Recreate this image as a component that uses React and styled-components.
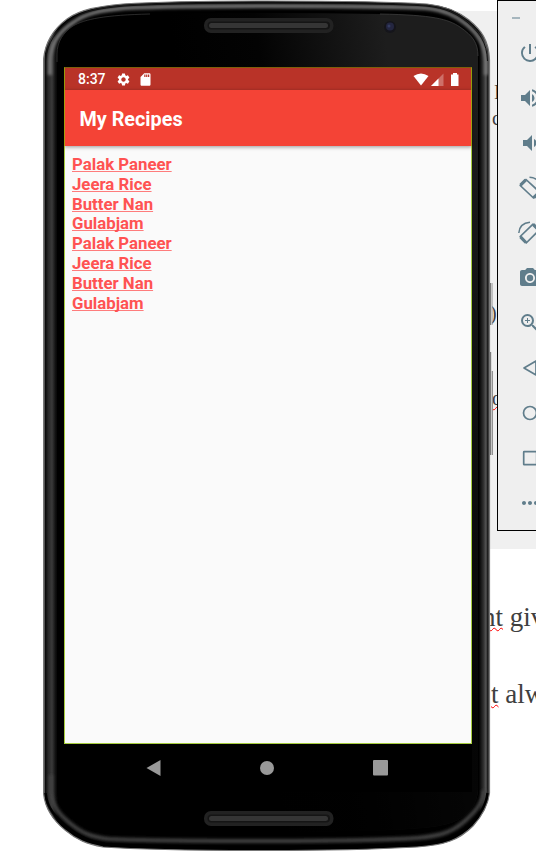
import React from "react";
import styled, { createGlobalStyle } from "styled-components";
import {
  MdPowerSettingsNew,
  MdVolumeUp,
  MdVolumeDown,
  MdPhotoCamera,
  MdZoomIn,
  MdMoreHoriz,
  MdSettings,
  MdSdCard,
} from "react-icons/md";

const GlobalStyle = createGlobalStyle`
  * { box-sizing: border-box; }
  body { margin: 0; background: #fff; }
`;

const Desktop = styled.div`
  position: relative;
  width: 536px;
  height: 864px;
  overflow: hidden;
  background: #fff;
`;

/* Document behind the emulator */
const Document = styled.div`
  display: flex;
  flex-direction: column;
  height: 100%;
  padding-top: 11px;
  font-family: "Liberation Serif", serif;
  color: #404040;
`;

const Quote = styled.div`
  height: 538px;
  margin-left: 400px;
  padding: 70px 0 0 90px;
  background: #f0f0f0;
  display: flex;
  flex-direction: column;
  align-items: flex-start;
`;

const Fragment = styled.span`
  font-size: 20px;
  line-height: 22px;
  height: 22px;
  margin-top: ${(p) => p.$gap || 0}px;
  margin-left: ${(p) => p.$indent || 0}px;
`;

const Line = styled.p`
  margin: ${(p) => p.$gap}px 0 0 ${(p) => p.$indent}px;
  height: 32px;
  font-size: 27px;
  line-height: 32px;
  white-space: pre;
`;

const Misspelt = styled.span`
  text-decoration: underline wavy #f00 1.2px;
  text-underline-offset: 1px;
  text-decoration-skip-ink: none;
`;

/* Emulator controls window */
const Controls = styled.aside`
  position: absolute;
  left: 497px;
  top: 0;
  width: 66px;
  height: 531px;
  border: 1px solid #000;
  background: #efefef;
  color: #607d8b;
  display: flex;
  flex-direction: column;
`;

const Minimize = styled.div`
  width: 8px;
  height: 2px;
  margin: 16px 0 0 14px;
  background: #a6b6be;
`;

const ControlList = styled.div`
  display: flex;
  flex-direction: column;
  gap: 21px;
  margin: 22px 0 0 20px;
  svg { display: block; width: 24px; height: 24px; }
`;

/* Phone */
const Phone = styled.div`
  position: absolute;
  left: 43px;
  top: 0;
  width: 452px;
  height: 852px;
  padding: 67px 23px 0 21px;
`;

const Shell = styled.svg`
  position: absolute;
  left: 0;
  top: 0;
`;

const Display = styled.div`
  position: relative;
  width: 408px;
  height: 725px;
  display: flex;
  flex-direction: column;
  background: #000;
  font-family: Roboto, sans-serif;
`;

const AppWindow = styled.div`
  position: relative;
  height: 677px;
  display: flex;
  flex-direction: column;
  background: #fafafa;
  &::after {
    content: "";
    position: absolute;
    z-index: 2;
    inset: 0;
    border: 1px solid rgba(140, 190, 0, 0.75);
    border-top-color: rgba(110, 110, 0, 0.75);
  }
`;

const StatusBar = styled.div`
  height: 23px;
  padding: 1px 13px 0 14px;
  display: flex;
  align-items: center;
  background: #b93328;
  color: #fff;
  font-size: 14px;
  font-weight: 500;
  svg { display: block; }
`;

const StatusIcons = styled.div`
  display: flex;
  align-items: center;
  gap: ${(p) => p.$gap}px;
  margin-left: ${(p) => p.$left};
`;

const AppBar = styled.header`
  height: 56px;
  padding: 2px 15.5px 0;
  display: flex;
  align-items: center;
  background: #f44336;
  color: #fff;
  font-size: 19.8px;
  font-weight: 700;
  box-shadow: 0 1px 4px rgba(0, 0, 0, 0.4);
  z-index: 1;
`;

const Recipes = styled.ul`
  list-style: none;
  margin: 0;
  padding: 9px 8px 8px;
  display: flex;
  flex-direction: column;
`;

const Recipe = styled.li`
  height: 19.8px;
  line-height: 19.8px;
  font-size: 16.8px;
  font-weight: 700;
  color: #ff5252;
  text-decoration: underline rgba(255, 82, 82, 0.75) 1px;
  text-decoration-skip-ink: none;
`;

const NavBar = styled.nav`
  height: 48px;
  display: flex;
  align-items: center;
  justify-content: space-between;
  padding: 0 84px 0 82px;
  svg { display: block; }
`;

const names = ["Palak Paneer", "Jeera Rice", "Butter Nan", "Gulabjam"];
const recipes = [...names, ...names];

function RotateLeftIcon() {
  return (
    <svg viewBox="0 0 24 24" fill="none" stroke="currentColor" strokeLinejoin="round">
      <path d="M2.200 9.500L8 3.500L21.500 16L15.500 22Z" strokeWidth="1.700" />
      <path d="M2.500 9.200L7.800 3.800M15.700 21.700L21.200 16.200" strokeWidth="3.200" />
      <path d="M11.500 1.200Q20 1.500 23 10" strokeWidth="1.500" />
    </svg>
  );
}

function RotateRightIcon() {
  return (
    <svg viewBox="0 0 24 24" fill="none" stroke="currentColor" strokeLinejoin="round">
      <path d="M2.200 15.500L15 3.200L21 9.200L8.200 22Z" strokeWidth="1.700" />
      <path d="M2.500 15.800L7.900 21.500M15.300 3.500L20.700 8.900" strokeWidth="3.200" />
      <path d="M.8 12Q1.500 2 12 1.200" strokeWidth="1.500" />
    </svg>
  );
}

function OutlineIcon({ children }) {
  return (
    <svg viewBox="0 0 24 24" fill="none" stroke="currentColor" strokeWidth="1.7" strokeLinejoin="round">
      {children}
    </svg>
  );
}

const bodyPath =
  "M.5 60C2 40 12 28 24 19C38 9 55 6.500 80 4Q130 1 224 1Q340 1 384 4C404 6 416 12 426 20C438 30 446 40 446.500 60V793C445 806 439 816 430 826C416 840 402 845 374 847Q310 850.500 224 850.500Q110 850.500 60 847C44 844 34 840 22 830C11 821 2 810 .5 793Z";
const facePath =
  "M14 54C14 41 21 32 30 26C42 19 62 15 107 14Q224 12 337 14C390 15 405 19 417 27C430 36 435 43 435 56V790C434 804 427 812 418 818C402 829 370 831 224 832Q75 831 50 825C30 819 14 808 14 790Z";

function PhoneShell() {
  return (
    <Shell width="452" height="852" viewBox="0 0 452 852" fill="none">
      <defs>
        <linearGradient id="rim" x1="0" x2="447" y1="0" y2="0" gradientUnits="userSpaceOnUse">
          <stop offset="0" stopColor="#858585" />
          <stop offset=".003" stopColor="#606060" />
          <stop offset=".005" stopColor="#090909" />
          <stop offset=".012" stopColor="#292929" />
          <stop offset=".02" stopColor="#3a3a3a" />
          <stop offset=".028" stopColor="#111" />
          <stop offset=".034" stopColor="#000" />
          <stop offset=".975" stopColor="#000" />
          <stop offset=".986" stopColor="#333" />
          <stop offset=".991" stopColor="#555" />
          <stop offset=".995" stopColor="#151515" />
          <stop offset="1" stopColor="#808080" />
        </linearGradient>
        <linearGradient id="glass" x1="130" y1="50" x2="340" y2="20" gradientUnits="userSpaceOnUse">
          <stop offset="0" stopColor="#000" />
          <stop offset=".4" stopColor="#030303" />
          <stop offset="1" stopColor="#1d1d1d" />
        </linearGradient>
        <linearGradient id="fade" x1="0" y1="0" x2="0" y2="1">
          <stop offset=".1" stopColor="#000" stopOpacity="0" />
          <stop offset=".85" stopColor="#000" stopOpacity=".8" />
        </linearGradient>
        <linearGradient id="keys" x1="0" y1="0" x2="1" y2="0">
          <stop offset="0" stopColor="#555" />
          <stop offset=".5" stopColor="#c5c5c5" />
          <stop offset="1" stopColor="#777" />
        </linearGradient>
        <clipPath id="body"><path d={bodyPath} /></clipPath>
        <filter id="soft"><feGaussianBlur stdDeviation="1.5" /></filter>
      </defs>
      <path d="M447 283h2.500v42h-2.500zM447 352h1.500v19h1.500v84h-3z" fill="url(#keys)" />
      <path d={bodyPath} fill="url(#rim)" />
      <g clipPath="url(#body)">
        <path d="M7 75V60C8 42 18 30 31 22C43 13 59 10 82 8Q130 6 224 6Q340 6 382 8C402 10 413 16 423 24C434 33 442 43 443 61V75" stroke="#757575" strokeWidth="4" filter="url(#soft)" />
        <path d="M8 775V792C9 807 18 816 28 824C39 833 48 837 66 839Q110 841 224 841Q330 841 374 838C398 836 410 832 423 820C434 810 440 802 441 790" stroke="#424242" strokeWidth="4" filter="url(#soft)" />
      </g>
      <path d={facePath} fill="url(#glass)" />
      <path d={facePath} fill="url(#fade)" />
      <path d="M14 62V54C14 41 21 32 30 26C42 19 62 15 107 14" stroke="#3c3c3c" strokeWidth=".7" />
      <path d="M337 14C390 15 405 19 417 27C430 36 435 43 435 56" stroke="#444" strokeWidth=".7" />
      <path d={bodyPath} stroke="#777" strokeWidth="1.200" />
      <path d="M2.500 61C4 42 14 30 26 21C39 11 56 8.500 81 6Q130 3 224 3Q340 3 383 6C403 8 414 14 424 22C436 32 444 42 444.500 61" stroke="#111" />
      <path d="M2.500 793C4 808 13 818 24 827C36 837 46 841 62 844Q112 847 224 847Q310 847 373 844C400 842 414 837 428 824C437 814 443 806 444.500 793" stroke="#000" strokeWidth="2.500" />
      {[18, 811].map((y) => (
        <g key={y}>
          <rect x="161" y={y} width="129.500" height="15" rx="7" fill="#222" />
          <rect x="164.500" y={y + 3.5} width="122.500" height="8" rx="4" fill="#151515" />
          <rect x="166" y={y + 5} width="119" height="5" rx="2.500" fill="#353535" />
        </g>
      ))}
      <circle cx="347" cy="27" r="6" fill="#15151b" />
      <circle cx="347" cy="26.500" r="4" fill="#242640" />
      <circle cx="346" cy="26" r="1.500" fill="#343c62" />
    </Shell>
  );
}

export default function App() {
  return (
    <Desktop>
      <GlobalStyle />
      <Document>
        <Quote>
          <Fragment $indent={4}>I</Fragment>
          <Fragment $gap={4} $indent={2}>c</Fragment>
          <Fragment $gap={173}>)</Fragment>
          <Fragment $gap={63} $indent={2}><Misspelt>o</Misspelt></Fragment>
        </Quote>
        <Line $gap={52} $indent={482}><Misspelt>nt</Misspelt> giv</Line>
        <Line $gap={45} $indent={491}><Misspelt>t</Misspelt> alw</Line>
      </Document>

      <Controls>
        <Minimize />
        <ControlList>
          <MdPowerSettingsNew />
          <MdVolumeUp />
          <MdVolumeDown />
          <RotateLeftIcon />
          <RotateRightIcon />
          <MdPhotoCamera />
          <MdZoomIn />
          <OutlineIcon><path d="M6 12 L18 5 V19 Z" /></OutlineIcon>
          <OutlineIcon><circle cx="12" cy="12" r="6.500" /></OutlineIcon>
          <OutlineIcon><rect x="5.700" y="5.700" width="13" height="13" rx=".5" /></OutlineIcon>
          <MdMoreHoriz />
        </ControlList>
      </Controls>

      <Phone>
        <PhoneShell />
        <Display>
          <AppWindow>
            <StatusBar>
              <span>8:37</span>
              <StatusIcons $gap={7} $left="10px">
                <MdSettings size={15} />
                <MdSdCard size={15} />
              </StatusIcons>
              <StatusIcons $gap={1.5} $left="auto">
                <svg width="16" height="13" viewBox="0 0 16 13" fill="#fff"><path d="M.5 3Q8-2 15.500 3L8 12.500Z" /></svg>
                <svg width="13" height="13" viewBox="0 0 13 13" fill="#fff"><path d="M0 13L12.500 .5V13Z" opacity=".3" /><path d="M0 13L7.500 5.500V13Z" /></svg>
                <svg width="14" height="13" viewBox="0 0 14 13" fill="#fff"><path d="M6 1.500H8V0H12V1.500H13.500V13H6Z" /></svg>
              </StatusIcons>
            </StatusBar>
            <AppBar>My Recipes</AppBar>
            <Recipes>
              {recipes.map((name, i) => <Recipe key={i}>{name}</Recipe>)}
            </Recipes>
          </AppWindow>
          <NavBar>
            <svg width="15" height="16" viewBox="0 0 15 16" fill="#999"><path d="M.5 8L14.500 0V16Z" /></svg>
            <svg width="14" height="14" viewBox="0 0 14 14" fill="#999"><circle cx="7" cy="7" r="7" /></svg>
            <svg width="15" height="16" viewBox="0 0 15 16" fill="#999"><rect width="15" height="15.500" rx="1" /></svg>
          </NavBar>
        </Display>
      </Phone>
    </Desktop>
  );
}
